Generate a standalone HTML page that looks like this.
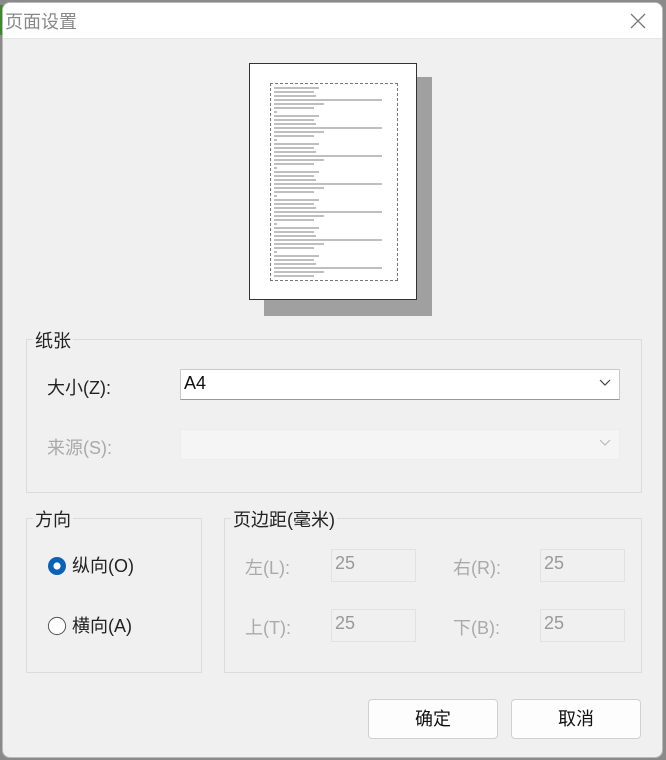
<!DOCTYPE html>
<html><head><meta charset="utf-8"><style>
*{margin:0;padding:0;box-sizing:border-box}
body{width:666px;height:760px;overflow:hidden;background:#8a8a8a;font-family:"Liberation Sans","Noto Sans CJK SC",sans-serif;position:relative}
.dlg{position:absolute;left:2px;top:2px;width:661px;height:756px;background:#f0f0f0;border:1px solid #bbb;border-radius:8px;overflow:hidden}
.title{position:absolute;left:0;top:0;width:100%;height:36px;background:#fff;border-bottom:1px solid #e6e6e6}
.title span{position:absolute;left:2px;top:5px;font-size:18px;color:#888}
.abs{position:absolute}
.grp{position:absolute;border:1px solid #dcdcdc}
.lg{position:absolute;font-size:18px;color:#222;background:#f0f0f0;padding:0 2px}
.lbl{position:absolute;font-size:18px;color:#222}
.dis{color:#aaa}
.inp{position:absolute;background:#f0f0f0;border:1px solid #e2e2e2;font-size:18px;color:#999;padding:3px 0 0 3px}
.btn{position:absolute;background:#fdfdfd;border:1px solid #d0d0d0;border-radius:4px;font-size:18px;color:#111;text-align:center;line-height:38px}
</style></head><body>
<div class="abs" style="left:0;top:5px;width:4px;height:30px;background:#3a8a2a"></div>
<div class="dlg">
<div class="title"><span>页面设置</span>
<svg class="abs" style="left:626px;top:9px" width="18" height="18"><path d="M2 2L16 16M16 2L2 16" stroke="#777" stroke-width="1.3"/></svg></div>

<div class="abs" style="left:261px;top:74px;width:168px;height:239px;background:#a0a0a0"></div>
<div class="abs" style="left:246px;top:60px;width:168px;height:237px;background:#fff;border:1px solid #333"></div>
<div class="abs" style="left:267px;top:80px;width:128px;height:198px;border:1px dashed #777"></div>
<svg class="abs" style="left:269px;top:82px" width="124" height="194">
<g stroke="#aaa" stroke-width="1.5">
<path d="M2 3h45M2 7h40M2 11h42M2 15h108M2 19h50M2 23h40M2 27h3"/>
<path transform="translate(0,28)" d="M2 3h45M2 7h40M2 11h42M2 15h108M2 19h50M2 23h40M2 27h3"/>
<path transform="translate(0,56)" d="M2 3h45M2 7h40M2 11h42M2 15h108M2 19h50M2 23h40M2 27h3"/>
<path transform="translate(0,84)" d="M2 3h45M2 7h40M2 11h42M2 15h108M2 19h50M2 23h40M2 27h3"/>
<path transform="translate(0,112)" d="M2 3h45M2 7h40M2 11h42M2 15h108M2 19h50M2 23h40M2 27h3"/>
<path transform="translate(0,140)" d="M2 3h45M2 7h40M2 11h42M2 15h108M2 19h50M2 23h40M2 27h3"/>
<path transform="translate(0,168)" d="M2 3h45M2 7h40M2 11h42M2 15h108M2 19h50M2 23h40"/>
</g></svg>

<div class="grp" style="left:23px;top:336px;width:616px;height:154px"></div>
<div class="lg" style="left:30px;top:324px">纸张</div>
<div class="lbl" style="left:44px;top:371px">大小(Z):</div>
<div class="abs" style="left:177px;top:366px;width:440px;height:31px;background:#fff;border:1px solid #c8c8c8;border-bottom-color:#999;font-size:18px;padding:3px 0 0 3px;color:#111">A4</div>
<svg class="abs" style="left:596px;top:376px" width="12" height="8"><path d="M1 1L6 6L11 1" stroke="#444" fill="none" stroke-width="1.2"/></svg>
<div class="lbl dis" style="left:44px;top:431px">来源(S):</div>
<div class="abs" style="left:177px;top:426px;width:440px;height:31px;background:#f5f5f5;border:1px solid #ececec"></div>
<svg class="abs" style="left:596px;top:436px" width="12" height="8"><path d="M1 1L6 6L11 1" stroke="#bbb" fill="none" stroke-width="1.2"/></svg>

<div class="grp" style="left:23px;top:515px;width:176px;height:155px"></div>
<div class="lg" style="left:30px;top:503px">方向</div>
<svg class="abs" style="left:44px;top:553px" width="20" height="20"><circle cx="10" cy="10" r="9" fill="#0a62b8"/><circle cx="10" cy="10" r="3.6" fill="#fff"/></svg>
<div class="lbl" style="left:69px;top:549px">纵向(O)</div>
<svg class="abs" style="left:44px;top:613px" width="20" height="20"><circle cx="10" cy="10" r="8.6" fill="#fff" stroke="#555" stroke-width="1"/></svg>
<div class="lbl" style="left:69px;top:609px">横向(A)</div>

<div class="grp" style="left:221px;top:515px;width:418px;height:155px"></div>
<div class="lg" style="left:228px;top:503px">页边距(毫米)</div>
<div class="lbl dis" style="left:242px;top:551px">左(L):</div>
<div class="inp" style="left:328px;top:546px;width:85px;height:33px">25</div>
<div class="lbl dis" style="left:450px;top:551px">右(R):</div>
<div class="inp" style="left:537px;top:546px;width:85px;height:33px">25</div>
<div class="lbl dis" style="left:242px;top:611px">上(T):</div>
<div class="inp" style="left:328px;top:606px;width:85px;height:33px">25</div>
<div class="lbl dis" style="left:450px;top:611px">下(B):</div>
<div class="inp" style="left:537px;top:606px;width:85px;height:33px">25</div>

<div class="btn" style="left:365px;top:696px;width:130px;height:40px">确定</div>
<div class="btn" style="left:508px;top:696px;width:130px;height:40px">取消</div>
</div>
</body></html>
